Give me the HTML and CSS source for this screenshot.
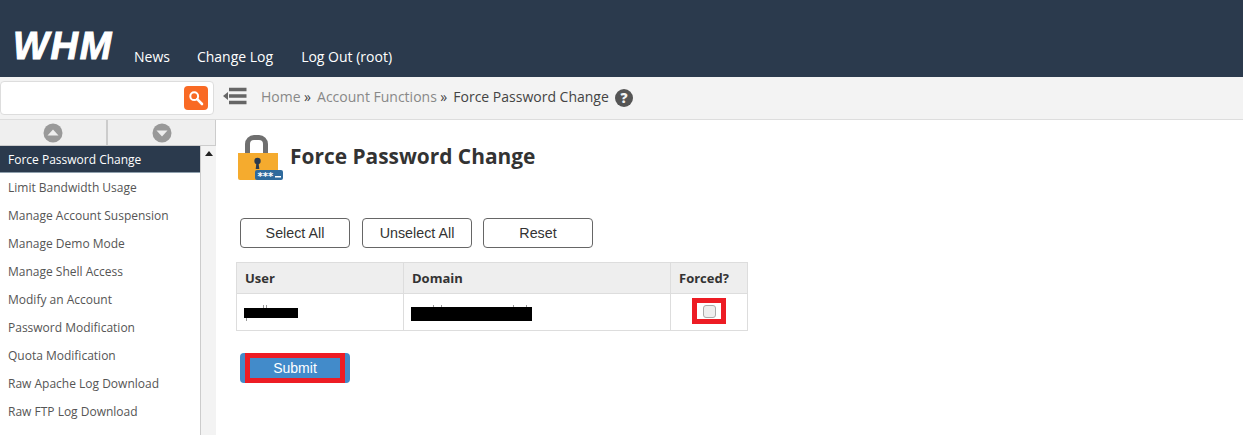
FILE: index.html
```html
<!DOCTYPE html>
<html lang="en">
<head>
	<meta http-equiv="Content-Type" content="text/html; charset=UTF-8">
	<title>WHM - Force Password Change</title>
	<link rel="stylesheet" href="styles.css">
</head>
<body>
	<div id="nav">
		<a href="#" class="logo">WHM</a>
		<ul class="nav-links">
			<li><a href="#">News</a></li>
			<li><a href="#">Change Log</a></li>
			<li><a href="#">Log Out (root)</a></li>
		</ul>
	</div>
	<div class="subbar">
		<div class="search_wrap">
			<div class="search">
				<input type="text" class="search_input">
				<button class="search_btn" type="button">
					<svg width="16" height="16" viewBox="0 0 16 16"><circle cx="6.2" cy="6.2" r="3.9" fill="none" stroke="#fff" stroke-width="2"/><path d="M9.2 9.2L14 14" stroke="#fff" stroke-width="2.6" stroke-linecap="round"/></svg>
				</button>
			</div>
		</div>
		<a href="#" class="collapse">
			<svg width="24" height="18" viewBox="0 0 24 18"><path d="M0 9l5-4v8z" fill="#666"/><path d="M6 2.500h17.500M6 9h17.500M6 15.500h17.500" stroke="#666" stroke-width="3.500"/></svg>
		</a>
		<div class="crumbs">
			<a href="#">Home</a><span class="sep">»</span>
			<a href="#">Account Functions</a><span class="sep">»</span>
			<span class="current">Force Password Change</span>
			<svg class="help" width="18" height="18" viewBox="0 0 18 18"><circle cx="9" cy="9" r="9" fill="#555"/><text x="9" y="14" text-anchor="middle" class="help_mark">?</text></svg>
		</div>
	</div>
	<div id="wrapper">
		<div class="sidebar">
			<div class="sort">
				<div class="sort_btn">
					<svg width="20" height="20" viewBox="0 0 20 20"><circle cx="10" cy="10" r="9.500" fill="#999"/><path d="M4.500 12.500L10 6.500l5.500 6z" fill="#eee"/></svg>
				</div>
				<div class="sort_btn">
					<svg width="20" height="20" viewBox="0 0 20 20"><circle cx="10" cy="10" r="9.500" fill="#999"/><path d="M4.500 7.500L10 13.500l5.500-6z" fill="#eee"/></svg>
				</div>
			</div>
			<div class="menu_wrap">
				<ul class="menu">
					<li class="active">Force Password Change</li>
					<li>Limit Bandwidth Usage</li>
					<li>Manage Account Suspension</li>
					<li>Manage Demo Mode</li>
					<li>Manage Shell Access</li>
					<li>Modify an Account</li>
					<li>Password Modification</li>
					<li>Quota Modification</li>
					<li>Raw Apache Log Download</li>
					<li>Raw FTP Log Download</li>
				</ul>
				<div class="scroll"><span class="scroll_up"></span></div>
			</div>
		</div>
		<div class="content">
			<div class="title_row">
				<svg class="lock" width="46" height="47" viewBox="0 0 46 47">
					<path d="M9.500 20V9a6.500 6.500 0 0 1 6.500-6.500h5A6.500 6.500 0 0 1 27.500 9v11" fill="none" stroke="#6f6f6f" stroke-width="5"/>
					<path d="M0 18h40v25a2 2 0 0 1-2 2H2a2 2 0 0 1-2-2z" fill="#f5ab2e"/>
					<circle cx="19.500" cy="26" r="3.200" fill="#2b3a4d"/>
					<path d="M18.500 27h2l.8 7h-3.600z" fill="#2b3a4d"/>
					<rect x="17" y="35" width="28" height="10" rx="2" fill="#2f6a9c"/>
					<text x="19.500" y="45" class="lock_mark">***</text>
					<rect x="37" y="41" width="6" height="1.500" fill="#fff"/>
				</svg>
				<h1 class="title">Force Password Change</h1>
			</div>
			<form class="force_form">
				<div class="actions">
					<input type="button" class="btn" value="Select All">
					<input type="button" class="btn" value="Unselect All">
					<input type="button" class="btn" value="Reset">
				</div>
				<table class="users">
					<thead>
						<tr><th class="col_user">User</th><th class="col_domain">Domain</th><th class="col_forced">Forced?</th></tr>
					</thead>
					<tbody>
						<tr>
							<td><span class="redact redact_user"></span></td>
							<td><span class="redact redact_domain"></span></td>
							<td class="forced"><span class="mark"><span class="check"></span></span></td>
						</tr>
					</tbody>
				</table>
				<div class="submit_wrap">
					<button type="submit" class="submit"><span class="submit_mark">Submit</span></button>
				</div>
			</form>
		</div>
	</div>
</body>
</html>
```
FILE: styles.css
```css
html,body{
	margin:0;
	padding:0;
	height:100%;
	overflow:hidden;
}
body{
	font-family:"Open Sans","Liberation Sans",sans-serif;
	background:#fff;
	color:#333;
}
a{
	text-decoration:none;
	color:inherit;
}
ul{
	margin:0;
	padding:0;
	list-style:none;
}
#nav{
	height:77px;
	box-sizing:border-box;
	background:#2b3a4d;
	display:flex;
	align-items:flex-end;
	padding:0 0 0 13px;
}
.logo{
	font-family:"Liberation Sans",sans-serif;
	font-weight:bold;
	font-style:italic;
	font-size:38px;
	line-height:27px;
	letter-spacing:1.7px;
	-webkit-text-stroke:1px #fff;
	color:#fff;
	margin-bottom:17px;
	width:121px;
}
.nav-links{
	display:flex;
	gap:27px;
	font-size:14px;
	line-height:20px;
	color:#fff;
	margin-bottom:10px;
}
.nav-links li:last-child{
	margin-left:1px;
}
.subbar{
	height:43px;
	box-sizing:border-box;
	background:#f3f3f3;
	border-bottom:1px solid #ddd;
	display:flex;
	align-items:center;
}
.search_wrap{
	width:216px;
	height:100%;
	box-sizing:border-box;
	padding:4px 0;
	flex:none;
}
.search{
	width:214px;
	height:34px;
	box-sizing:border-box;
	background:#fff;
	border:1px solid #ddd;
	border-radius:4px;
	display:flex;
	align-items:center;
	justify-content:space-between;
	padding:0 5px 0 0;
}
.search_input{
	border:0;
	outline:0;
	background:transparent;
	width:170px;
	height:24px;
	padding:0;
}
.search_btn{
	width:24px;
	height:24px;
	padding:0;
	border:0;
	border-radius:4px;
	background:#f96a24;
	display:flex;
	align-items:center;
	justify-content:center;
}
.collapse{
	display:flex;
	width:24px;
	margin:-5px 0 0 7px;
}
.crumbs{
	display:flex;
	align-items:center;
	font-size:14px;
	color:#888;
	margin-left:14px;
	margin-top:-3px;
}
.sep{
	color:#444;
	margin:0 6px 0 3.5px;
}
.current{
	color:#444;
}
.help{
	margin-left:6px;
	margin-top:2px;
}
.help_mark{
	font-family:"Open Sans",sans-serif;
	font-weight:800;
	font-size:14px;
	fill:#f3f3f3;
}
#wrapper{
	display:flex;
	height:315px;
}
.sidebar{
	width:216px;
	flex:none;
}
.sort{
	display:flex;
	height:26px;
	box-sizing:border-box;
	background:#efefef;
	border-bottom:1px solid #ccc;
}
.sort_btn{
	width:108px;
	display:flex;
	align-items:center;
	justify-content:center;
	box-sizing:border-box;
	border-right:2px solid #ccc;
}
.sort_btn + .sort_btn{
	border-right-width:1px;
}
.menu_wrap{
	display:flex;
	height:289px;
}
.menu{
	width:200px;
	font-size:12px;
}
.menu li{
	height:28px;
	line-height:29px;
	padding-left:8px;
	color:#555;
}
.menu li.active{
	height:27px;
	background:#2b3a4d;
	border-bottom:1px solid #8fa0ad;
	box-sizing:border-box;
	line-height:28px;
	color:#fff;
}
.scroll{
	width:15px;
	background:#f3f3f3;
	border-left:1px solid #ccc;
	position:relative;
}
.scroll_up{
	position:absolute;
	top:5px;
	left:4px;
	border:4px solid transparent;
	border-top:0;
	border-bottom:5px solid #222;
}
.content{
	flex:1;
	padding:15px 0 0 22px;
}
.title_row{
	display:flex;
	align-items:flex-start;
	gap:6px;
}
.title{
	margin:7px 0 0;
	font-size:20.9px;
	line-height:28px;
	font-weight:700;
	color:#333;
}
.lock_mark{
	font-family:"DejaVu Sans",sans-serif;
	font-size:10px;
	font-weight:bold;
	fill:#fff;
}
.force_form{
	margin-top:36px;
}
.actions{
	display:flex;
	gap:12px;
	padding-left:2px;
}
.btn{
	width:110px;
	height:30px;
	background:#fff;
	border:1px solid #666;
	border-radius:4px;
	font-family:"Liberation Sans",sans-serif;
	font-size:14.3px;
	color:#333;
	padding:0;
}
.btn:last-child{
	margin-left:-1px;
}
.users{
	margin:14px 0 0 -2px;
	border-collapse:collapse;
	width:512px;
	table-layout:fixed;
	font-size:13px;
}
.users th{
	height:31px;
	background:#eee;
	border:1px solid #ddd;
	text-align:left;
	padding:0 8px;
	color:#333;
	box-sizing:border-box;
}
.col_user{
	width:167px;
}
.col_domain{
	width:267px;
}
.users td{
	height:37px;
	border:1px solid #ddd;
	padding:0 7px;
	box-sizing:border-box;
}
.redact{
	display:block;
	background:#000;
	position:relative;
}
.redact::before,.redact::after{
	content:"";
	position:absolute;
	box-sizing:border-box;
	border-left:1px solid #999;
	border-right:1px solid #999;
}
.redact_user{
	width:54px;
	height:10px;
	margin-top:2px;
}
.redact_user::before{
	left:19px;
	top:-3px;
	width:4px;
	height:3px;
}
.redact_user::after{
	left:2px;
	top:10px;
	width:1px;
	height:3px;
	border-right:0;
}
.redact_domain{
	width:121px;
	height:14px;
	margin-top:4px;
}
.redact_domain::before{
	left:22px;
	top:-2px;
	width:9px;
	height:2px;
}
.redact_domain::after{
	left:102px;
	top:-2px;
	width:14px;
	height:2px;
}
.forced{
	text-align:center;
}
.mark{
	display:flex;
	align-items:center;
	justify-content:center;
	width:34px;
	height:26px;
	box-sizing:border-box;
	border:5px solid #ed1c24;
	margin:-2px auto 0;
}
.check{
	width:13px;
	height:13px;
	box-sizing:border-box;
	border:1px solid #aaa;
	border-radius:3px;
	background:#eee;
}
.submit_wrap{
	margin-top:22px;
	padding-left:2px;
}
.submit{
	display:block;
	width:110px;
	height:30px;
	background:#428bca;
	border:0;
	border-radius:4px;
	font-family:"Liberation Sans",sans-serif;
	font-size:14px;
	color:#fff;
	padding:0 5px;
}
.submit_mark{
	display:block;
	height:30px;
	line-height:20px;
	box-sizing:border-box;
	border:5px solid #ed1c24;
}
```
